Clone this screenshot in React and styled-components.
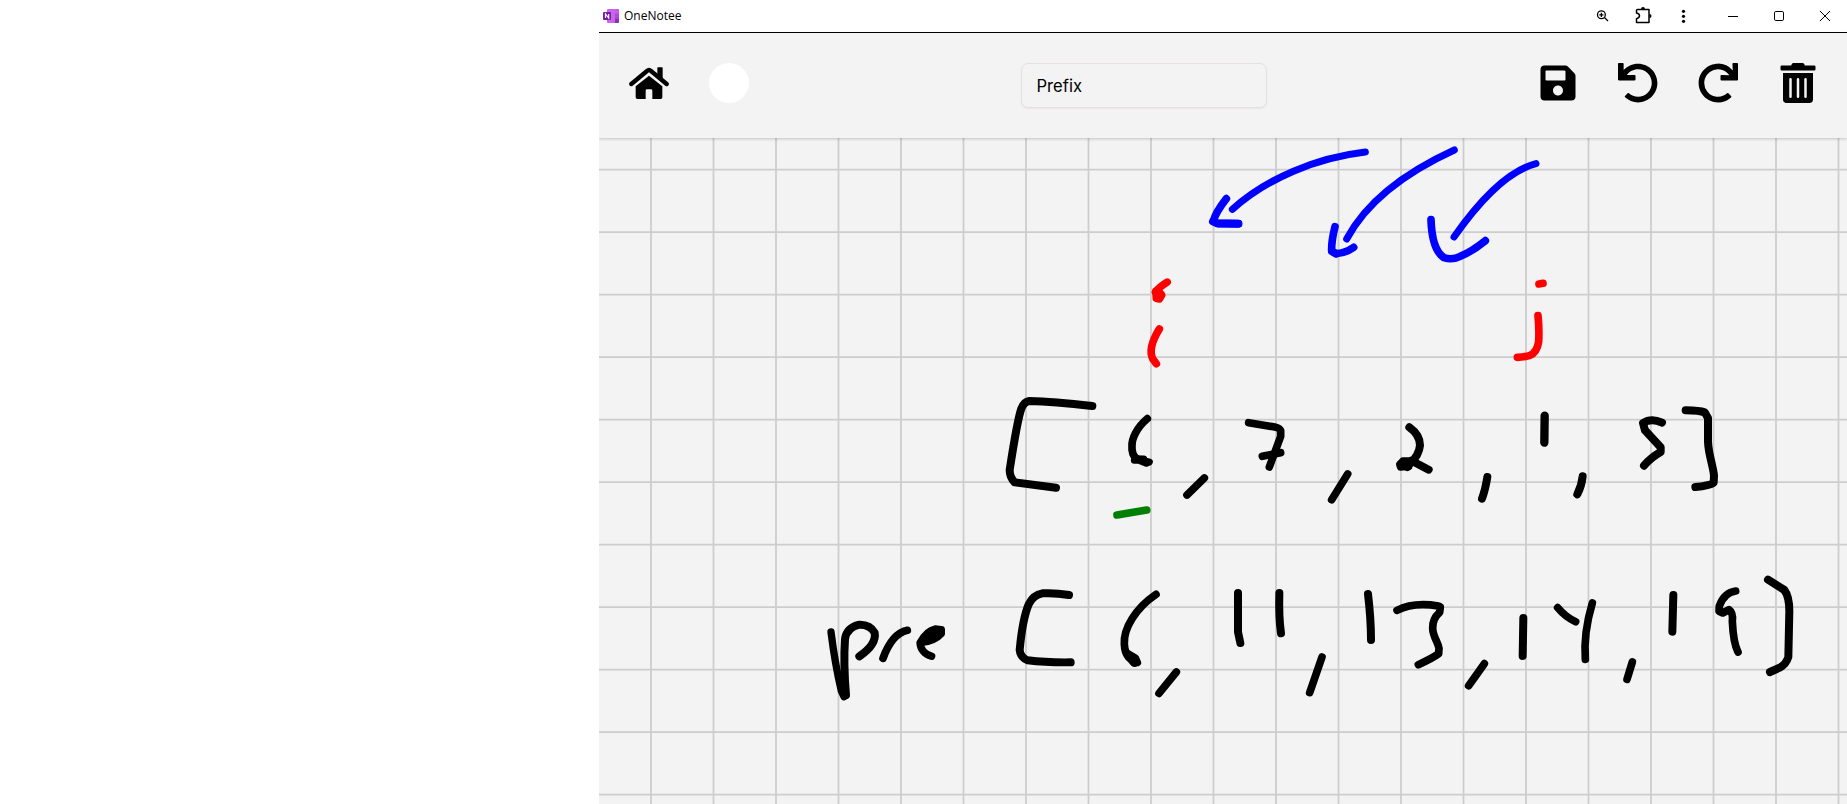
import React from "react";
import styled, { createGlobalStyle } from "styled-components";
import { FaSave, FaUndo, FaRedo, FaTrashAlt } from "react-icons/fa";

const GlobalStyle = createGlobalStyle`
  * { box-sizing: border-box; }
  body { margin: 0; background: #fff; overflow: hidden; }
`;

const Desktop = styled.div`
  display: flex;
  justify-content: flex-end;
  width: 100vw;
  height: 100vh;
  background: #fff;
`;

const Window = styled.main`
  display: flex;
  flex-direction: column;
  width: 1248px;
  height: 100%;
  overflow: hidden;
  background: #f3f3f3;
`;

const TitleBar = styled.div`
  display: flex;
  align-items: center;
  flex: none;
  height: 33px;
  padding-left: 4px;
  background: #fff;
  border-bottom: 1px solid #000;
`;

const AppTitle = styled.span`
  flex: 1;
  margin-left: 5px;
  font: 12px/16px "Open Sans", "Noto Sans", sans-serif;
  color: #000;
`;

const Controls = styled.svg`
  display: block;
  flex: none;
`;

const Header = styled.header`
  position: relative;
  display: flex;
  justify-content: space-between;
  align-items: flex-start;
  flex: none;
  height: 105px;
  padding: 30px 29px 30px 30px;
  background: #f3f3f3;
  box-shadow: 0 1px 3px rgba(0, 0, 0, 0.2);
`;

const Group = styled.div`
  display: flex;
  gap: 40px;
`;

const ToolButton = styled.button`
  display: flex;
  align-items: center;
  justify-content: center;
  width: 40px;
  height: 40px;
  padding: 0;
  border: 0;
  border-radius: 50%;
  background: ${(p) => p.$fill || "transparent"};
  color: #000;
`;

const NameInput = styled.input`
  width: 246px;
  height: 45px;
  padding: 0 14px 0 15px;
  border: 1px solid #e6dfe6;
  border-radius: 7px;
  outline: 0;
  background: #f3f3f3;
  color: #000;
  font: 16.6px Inter, sans-serif;
  box-shadow: 0 1px 2px rgba(0, 0, 0, 0.05);
`;

const Canvas = styled.svg`
  display: block;
  flex: 1;
  width: 1248px;
  min-height: 0;
`;

const Ink = styled.path`
  fill: none;
  stroke: ${(p) => p.$color || "#000"};
  stroke-width: ${(p) => p.$w + 1};
  stroke-linecap: round;
  stroke-linejoin: round;
`;

const columns = Array.from({ length: 20 }, (_, i) => 651 + i * 62.5);
const rows = Array.from({ length: 11 }, (_, i) => 169.6 + i * 62.5);

// Handwriting grouped by region; points are stored at three units per pixel.
const strokes = [
  {
    at: [1190, 130],
    color: "#0000ff",
    paths: [
      ["M526 66C380 83 230 145 127 238", 20],
      ["M109 206C91 229 76 249 70 274L84 281L146 281", 22],
      ["M69 274L82 280L144 281", 23],
      ["M793 60C640 130 530 215 470 327", 20],
      ["M435 290C428 318 424 338 425 363L438 371", 22],
      ["M426 364L438 371Q465 370 491 352", 22],
      ["M1038 101C955 122 870 210 792 321", 20],
      ["M723 269C725 330 737 367 762 383Q787 391 811 379Q848 363 886 332", 22],
    ],
  },
  {
    at: [1120, 260],
    color: "#ff0000",
    paths: [
      ["M142 66Q119 80 106 96", 21],
      ["M108 94L109 115L118 117L125 105L116 94L108 98L118 110", 22],
      ["M118 207C94 246 89 277 98 296L109 311", 22],
      ["M1257 72L1269 70", 22],
      ["M1254 167Q1258 205 1256 245Q1251 279 1228 287Q1209 292 1192 292", 22],
    ],
  },
  {
    at: [980, 380],
    paths: [
      ["M337 78Q220 65 148 63Q132 65 124 86Q112 120 89 270Q89 292 104 307L228 323", 23],
      ["M502 116C469 144 455 177 456 198Q454 222 469 236", 22],
      ["M463 241Q490 239 508 246L499 250L465 236L491 237", 20],
      ["M673 294L621 345", 22],
      ["M806 128L884 141Q899 144 902 152L902 169L868 261", 22],
      ["M847 229L902 218", 22],
      ["M1103 282L1055 359", 22],
    ],
  },
  {
    at: [980, 380],
    color: "#008000",
    paths: [["M411 405L500 390", 22]],
  },
  {
    at: [1360, 380],
    paths: [
      ["M148 142Q180 165 180 196Q177 226 151 249L142 261", 23],
      ["M147 260L121 262L118 253L128 242L156 242L142 259", 19],
      ["M155 242L206 269", 23],
      ["M382 291Q376 329 366 356", 23],
      ["M554 107L553 188", 24],
      ["M668 289Q665 317 652 343", 23],
      ["M906 128Q874 113 849 129L855 151L902 202L902 216Q872 233 852 257", 23],
      ["M977 91Q1019 92 1034 97L1044 114V184C1045 222 1059 256 1062 287L1061 308Q1048 317 1006 321", 23],
    ],
  },
  {
    at: [800, 560],
    paths: [
      ["M93 216Q105 312 124 393L132 410", 21],
      ["M138 405Q130 311 135 237Q140 203 178 194Q210 193 224 218Q230 254 178 289", 23],
      ["M130 350L134 407", 22],
      ["M249 295Q276 221 322 211", 22],
      ["M363 248Q404 244 424 221L424 209L405 207Q380 212 360 248Q362 278 395 289", 21],
      ["M374 237L387 223L412 217L389 235", 21],
      ["M807 105Q766 98 727 100Q700 105 687 131Q668 174 659 270Q661 292 683 301Q740 308 812 307", 23],
      ["M1068 103C1006 145 970 206 973 252Q974 276 985 291L1004 309", 22],
      ["M982 279L1007 294L1013 308L1001 309L990 295", 20],
      ["M1129 336L1077 400", 22],
    ],
  },
  {
    at: [1130, 560],
    paths: [
      ["M324 99V216L331 249", 23],
      ["M448 99Q446 172 453 220", 23],
      ["M576 291L539 398", 22],
      ["M714 102Q723 178 723 240", 23],
      ["M801 151Q850 126 925 138L931 141L929 157Q907 176 908 205C909 231 925 248 927 265L926 281Q909 294 865 314", 22],
    ],
  },
  {
    at: [1450, 560],
    paths: [
      ["M103 311L56 377", 22],
      ["M220 174L218 288", 23],
      ["M323 143Q347 172 377 185", 22],
      ["M427 129Q400 220 406 298", 22],
      ["M547 306L531 358", 22],
      ["M670 105L667 215", 23],
      ["M857 93Q823 97 808 138L807 154L818 159L837 149Q850 158 847 184C849 227 852 253 864 276", 22],
      ["M954 59L1003 90Q1018 110 1018 153L1015 291Q1009 312 989 323L960 336", 23],
    ],
  },
];

function HomeIcon() {
  return (
    <svg width="40" height="40" viewBox="117 189 120 120">
      <path
        d="M124 252L171 213Q177 207 183 213L230 252"
        fill="none"
        stroke="#000"
        strokeWidth="13"
        strokeLinecap="round"
        strokeLinejoin="round"
      />
      <path d="M202 204Q202 202 204 202H216Q218 202 218 204V240L202 226z" />
      <path d="M137 259L177 227L217 259V292Q217 297 212 297H187V272Q187 268 183 268H171Q167 268 167 272V297H142Q137 297 137 292z" />
    </svg>
  );
}

function AppLogo() {
  return (
    <Controls width="16" height="14" viewBox="0 0 16 14">
      <rect x="4" y="0" width="12" height="14" rx="1" fill="#ca64ea" />
      <path d="M12 0h3a1 1 0 0 1 1 1v3.5h-4z" fill="#c45ee6" />
      <path d="M12 4.5h4v5h-4z" fill="#ae4bd5" />
      <path d="M12 9.5h4V13a1 1 0 0 1-1 1h-3z" fill="#8534b5" />
      <rect x="0" y="3" width="8" height="8" rx="1" fill="#7719aa" />
      <path d="M2.5 9V5l3.2 4V5" fill="none" stroke="#fff" strokeWidth="1.2" />
    </Controls>
  );
}

function WindowControls() {
  return (
    <Controls width="260" height="32" viewBox="1587 0 260 32" fill="none" stroke="#000">
      <circle cx="1601.4" cy="14.8" r="3.9" strokeWidth="1.3" />
      <path d="M1604.5 17.5L1608 21M1599.3 14.8h4.2M1601.4 12.7v4.2" strokeWidth="1.3" />
      <path
        d="M1637.5 9.5h11.5v13h-12.5v-3.8q3-.7 3-2.9t-3-2.9v-2.4q0-1 1-1z"
        strokeWidth="1.5"
        strokeLinejoin="round"
      />
      <path d="M1641 9a2 2 0 0 1 4 0zM1649.5 14a2 2 0 0 1 0 4z" fill="#000" stroke="none" />
      <g fill="#000" stroke="none">
        <circle cx="1683.5" cy="11.3" r="1.6" />
        <circle cx="1683.5" cy="16.3" r="1.6" />
        <circle cx="1683.5" cy="21.3" r="1.6" />
      </g>
      <path d="M1728 16.5h10" />
      <rect x="1774.5" y="11.5" width="9" height="9" rx="1.3" />
      <path d="M1820 11l10 10M1830 11l-10 10" />
    </Controls>
  );
}

export default function App() {
  return (
    <Desktop>
      <GlobalStyle />
      <Window>
        <TitleBar>
          <AppLogo />
          <AppTitle>OneNotee</AppTitle>
          <WindowControls />
        </TitleBar>
        <Header>
          <Group>
            <ToolButton aria-label="Home"><HomeIcon /></ToolButton>
            <ToolButton aria-label="Pen colour" $fill="#fff" />
          </Group>
          <NameInput aria-label="Note name" defaultValue="Prefix" />
          <Group>
            <ToolButton aria-label="Save"><FaSave size={40} /></ToolButton>
            <ToolButton aria-label="Undo"><FaUndo size={40} /></ToolButton>
            <ToolButton aria-label="Redo"><FaRedo size={40} /></ToolButton>
            <ToolButton aria-label="Delete"><FaTrashAlt size={40} /></ToolButton>
          </Group>
        </Header>
        <Canvas viewBox="599 138 1248 666">
          <g stroke="#cdcdcd" strokeWidth="1.8">
            {columns.map((x) => <path key={x} d={`M${x} 138V804`} />)}
            {rows.map((y) => <path key={y} d={`M599 ${y}H1847`} />)}
          </g>
          {strokes.map(({ at, color, paths }, i) => (
            <g key={i} transform={`translate(${at[0]} ${at[1]}) scale(${1 / 3})`}>
              {paths.map(([d, w]) => <Ink key={d} d={d} $w={w} $color={color} />)}
            </g>
          ))}
        </Canvas>
      </Window>
    </Desktop>
  );
}
